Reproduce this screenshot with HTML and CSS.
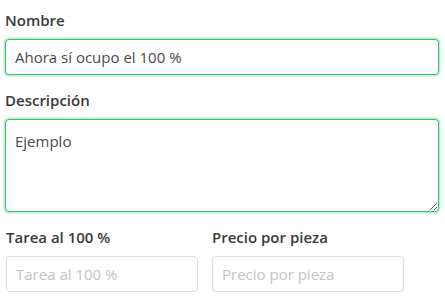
FILE: index.html
```html
<!DOCTYPE html>
<html lang="es">
<head>
<meta charset="utf-8">
<title>Formulario</title>
<link rel="stylesheet" href="styles.css">
</head>
<body>
<form class="form">
  <div class="group">
    <label class="label" for="nombre">Nombre</label>
    <input class="control control-ok" id="nombre" type="text" value="Ahora sí ocupo el 100 %" autofocus>
  </div>
  <div class="group">
    <label class="label" for="desc">Descripción</label>
    <textarea class="control control-ok area" id="desc">Ejemplo</textarea>
  </div>
  <div class="row">
    <div class="group col">
      <label class="label" for="tarea">Tarea al 100 %</label>
      <input class="control" id="tarea" type="text" placeholder="Tarea al 100 %">
    </div>
    <div class="group col">
      <label class="label" for="precio">Precio por pieza</label>
      <input class="control" id="precio" type="text" placeholder="Precio por pieza">
    </div>
  </div>
</form>
</body>
</html>
```
FILE: styles.css
```css
html, body {
  margin: 0;
  padding: 0;
  background: #fff;
}
body {
  font-family: "Open Sans", "Noto Sans", "Liberation Sans", sans-serif;
  font-size: 15px;
  color: #333;
}
.form {
  padding: 10px 6px 0 5px;
  width: 434px;
}
.group {
  display: flex;
  flex-direction: column;
  margin-bottom: 15px;
}
.label {
  font-weight: 600;
  font-size: 15px;
  line-height: 20px;
  margin-bottom: 9px;
  color: #3a3a3a;
}
.control {
  box-sizing: border-box;
  width: 100%;
  height: 36px;
  padding: 6px 9px;
  font-family: inherit;
  font-size: 15px;
  color: #4a4a4a;
  border: 1px solid #ddd;
  border-radius: 4px;
  background: #fff;
  outline: none;
  caret-color: #000;
}
.control::placeholder {
  color: #c4c4c4;
}
.control-ok {
  border-color: #3fbf6f;
  box-shadow: 0 0 0 1.5px rgba(130, 235, 170, 0.6);
}
.area {
  height: 93px;
  resize: vertical;
  padding: 11px 9px;
  line-height: 20px;
}
.row {
  display: flex;
  gap: 14px;
  padding-left: 1px;
}
.col {
  width: 192px;
}
```
